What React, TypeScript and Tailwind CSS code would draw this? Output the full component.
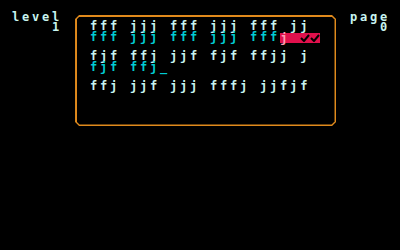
const ROWS = [
  { target: 'fff jjj fff jjj fff jj', typed: 'fff jjj fff jjj fff', error: true },
  { target: 'fjf ffj jjf fjf ffjj j', typed: 'fjf ffj', cursor: true },
  { target: 'ffj jjf jjj fffj jjfjf' },
]

function Check() {
  return (
    <svg width="10" height="8" viewBox="0 0 10 8" className="inline-block">
      <path d="M1 4l3 3 5-6" fill="none" stroke="#000" strokeWidth={2} />
    </svg>
  )
}

export default function App() {
  return (
    <div
      className="w-[400px] h-[250px] bg-black flex items-start text-[12px] font-bold tracking-[2.78px] text-[#c8f4f0]"
      style={{ fontFamily: '"DejaVu Sans Mono", monospace' }}
    >
      {/* level */}
      <div className="ml-[12px] mt-[12px] leading-[10px] text-right whitespace-pre">
        <div>level</div>
        <div>1</div>
      </div>

      {/* Board */}
      <div className="ml-[13px] mt-[15px] w-[261px] h-[111px] bg-[#e08a1c] p-[1.5px] [clip-path:polygon(4px_0,calc(100%-4px)_0,100%_4px,100%_calc(100%-4px),calc(100%-4px)_100%,4px_100%,0_calc(100%-4px),0_4px)]">
        <div className="w-full h-full bg-black pl-[13.5px] pt-[4.5px] flex flex-col gap-[8px] leading-[11px] whitespace-pre [clip-path:polygon(3px_0,calc(100%-3px)_0,100%_3px,100%_calc(100%-3px),calc(100%-3px)_100%,3px_100%,0_calc(100%-3px),0_3px)]">
          {ROWS.map((row, i) => (
            <div key={i}>
              <div>{row.target}</div>
              {row.typed !== undefined && (
                <div className="text-[#00ccd4] flex">
                  <span>{row.typed}</span>
                  {row.error && (
                    <span className="bg-[#e0104c] h-[10px] mt-px w-[40px] flex items-center">
                      <span className="w-[20px] text-[#ff9cb4] leading-[10px]">j</span>
                      <Check />
                      <Check />
                    </span>
                  )}
                  {row.cursor && <span>_</span>}
                </div>
              )}
            </div>
          ))}
        </div>
      </div>

      {/* page */}
      <div className="ml-[14px] mt-[12px] leading-[10px] text-right whitespace-pre">
        <div>page</div>
        <div>0</div>
      </div>
    </div>
  )
}
